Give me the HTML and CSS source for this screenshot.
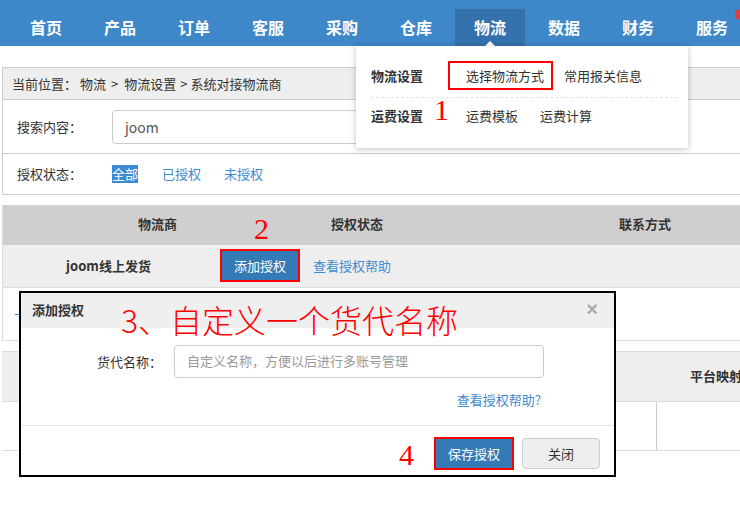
FILE: index.html
```html
<!DOCTYPE html>
<html lang="zh-CN">
<head>
<meta charset="utf-8">
<title>系统对接物流商</title>
<link rel="stylesheet" href="styles.css">
</head>
<body>
<header class="nav">
  <ul class="nav-list">
    <li class="nav-item">首页</li>
    <li class="nav-item">产品</li>
    <li class="nav-item">订单</li>
    <li class="nav-item">客服</li>
    <li class="nav-item">采购</li>
    <li class="nav-item">仓库</li>
    <li class="nav-item active">物流<span class="caret"></span></li>
    <li class="nav-item">数据</li>
    <li class="nav-item">财务</li>
    <li class="nav-item">服务</li>
  </ul>
  <span class="nav-dot"></span>
</header>

<main class="page">
  <div class="crumb">
    <span class="c-lead">当前位置：</span>
    <span class="c-a">物流</span>
    <span class="c-sep1">&gt;</span>
    <span class="c-b">物流设置</span>
    <span class="c-sep2">&gt;</span>
    <span class="c-c">系统对接物流商</span>
  </div>

  <section class="search">
    <div class="search-row">
      <span class="field-label">搜索内容：</span>
      <div class="search-input">joom</div>
    </div>
    <div class="status-row">
      <span class="field-label">授权状态：</span>
      <span class="sel">全部</span>
      <a class="link">已授权</a>
      <a class="link">未授权</a>
    </div>
  </section>

  <section class="table1">
    <div class="thead">
      <span>物流商</span>
      <span>授权状态</span>
      <span></span>
      <span>联系方式</span>
    </div>
    <div class="trow">
      <span class="carrier">joom线上发货</span>
      <button class="btn btn-primary btn-marked">添加授权</button>
      <a class="link">查看授权帮助</a>
    </div>
    <div class="trow2"><span class="dash"></span></div>
  </section>

  <section class="table2">
    <div class="thead2"><span class="col-spacer"></span><span class="th2">平台映射</span></div>
    <div class="trow3"><span class="cell"></span><span class="cell cell-last"></span></div>
  </section>
</main>

<div class="dropdown">
  <div class="dd-row">
    <span class="dd-title">物流设置</span>
    <div class="dd-links"><a>选择物流方式</a><a>常用报关信息</a></div>
  </div>
  <div class="dd-row dd-row2">
    <span class="dd-title">运费设置</span>
    <div class="dd-links"><a>运费模板</a><a>运费计算</a></div>
  </div>
  <span class="dd-mark"></span>
</div>

<div class="modal">
  <div class="modal-head">
    <span class="modal-title">添加授权</span>
    <span class="modal-close">×</span>
  </div>
  <div class="modal-body">
    <div class="form-row">
      <span class="form-label">货代名称：</span>
      <div class="form-input">自定义名称，方便以后进行多账号管理</div>
    </div>
    <div class="help-row"><a class="link">查看授权帮助?</a></div>
  </div>
  <div class="modal-foot">
    <button class="btn btn-primary btn-marked">保存授权</button>
    <button class="btn btn-default">关闭</button>
  </div>
</div>

<span class="anno anno-1">1</span>
<span class="anno anno-2">2</span>
<span class="anno anno-3">3、自定义一个货代名称</span>
<span class="anno anno-4">4</span>
</body>
</html>
```

FILE: styles.css
```css
html, body {
  margin: 0;
  padding: 0;
}
body {
  width: 740px;
  height: 506px;
  overflow: hidden;
  position: relative;
  background: #fff;
  font-family: "Noto Sans CJK SC", "Microsoft YaHei", sans-serif;
  font-size: 13px;
  color: #333;
}
a { cursor: pointer; }

/* nav */
.nav {
  height: 46px;
  background: #3e87c8;
  position: relative;
}
.nav-list {
  list-style: none;
  margin: 0;
  padding: 9px 0 0 11px;
  display: flex;
  gap: 4px;
}
.nav-item {
  width: 70px;
  height: 37px;
  line-height: 36px;
  text-align: center;
  color: #fff;
  font-size: 16px;
  font-weight: bold;
  position: relative;
  flex: none;
}
.nav-item.active {
  background: #3571ad;
}
.caret {
  position: absolute;
  left: 30px;
  bottom: 0;
  width: 0;
  height: 0;
  border-left: 5px solid transparent;
  border-right: 5px solid transparent;
  border-bottom: 5px solid #fff;
}
.nav-dot {
  position: absolute;
  left: 735px;
  top: 9px;
  width: 11px;
  height: 11px;
  border-radius: 50%;
  background: #e83a3a;
}

/* page */
.page {
  width: 760px;
  margin: 21px 0 0 2px;
}
.crumb {
  height: 31px;
  border: 1px solid #ccc;
  background: #eee;
  padding-left: 9px;
  color: #333;
  display: flex;
  align-items: center;
  white-space: nowrap;
}
.c-lead { margin-right: 3px; }
.c-sep1 { margin: 0 6px 0 5px; }
.c-sep2 { margin: 0 3px 0 4px; }
.search {
  border: 1px solid #ccc;
  border-top: none;
}
.search-row {
  height: 53px;
  display: flex;
  align-items: center;
  padding-left: 14px;
  border-bottom: 1px solid #ccc;
}
.field-label {
  width: 95px;
  flex: none;
  color: #333;
}
.search-input {
  width: 400px;
  height: 32px;
  line-height: 32px;
  border: 1px solid #ccc;
  border-radius: 4px;
  padding-left: 12px;
  color: #555;
  font-size: 14px;
}
.status-row {
  height: 40px;
  display: flex;
  align-items: center;
  padding-left: 14px;
  padding-bottom: 1px;
  box-sizing: border-box;
}
.sel {
  background: #3b8bd6;
  color: #fff;
  line-height: 18px;
  margin-right: 24px;
}
.link {
  color: #3d8bd1;
  margin-right: 23px;
}

/* table 1 */
.table1 {
  margin-top: 10px;
  border-left: 1px solid #ddd;
  border-bottom: 1px solid #ddd;
}
.thead {
  height: 40px;
  padding-bottom: 3px;
  box-sizing: border-box;
  background: #cfcfcf;
  display: grid;
  grid-template-columns: 309px 90px 148px 190px;
  align-items: center;
  font-weight: bold;
  text-align: center;
}
.trow {
  height: 43px;
  padding-bottom: 2px;
  box-sizing: border-box;
  background: #eee;
  border-bottom: 1px solid #ddd;
  display: flex;
  align-items: center;
}
.carrier {
  width: 211px;
  text-align: center;
  font-weight: bold;
  flex: none;
}
.trow .btn {
  margin-left: 6px;
  margin-right: 13px;
}
.trow2 {
  height: 52px;
  position: relative;
}
.dash {
  position: absolute;
  left: 12px;
  top: 26px;
  width: 4px;
  height: 1px;
  background: #3d8bd1;
}

/* buttons */
.btn {
  width: 80px;
  height: 33px;
  font-family: inherit;
  font-size: 13px;
  border-radius: 3px;
  padding: 0;
  flex: none;
}
.btn-primary {
  background: #337ab7;
  color: #fff;
  border: 1px solid #2e6da4;
}
.btn-marked {
  border: 2px solid #f00;
  border-radius: 0;
}
.btn-default {
  background: #eee;
  color: #333;
  border: 1px solid #ccc;
  width: 78px;
  height: 31px;
  margin-top: 1px;
  border-radius: 4px;
}

/* table 2 */
.table2 {
  margin-top: 10px;
  border-top: 1px solid #ddd;
  border-bottom: 1px solid #ddd;
}
.thead2 {
  height: 50px;
  padding-bottom: 3px;
  box-sizing: border-box;
  background: #eee;
  display: flex;
  align-items: center;
  border-bottom: 1px solid #ddd;
}
.col-spacer {
  width: 688px;
  flex: none;
}
.th2 {
  font-weight: bold;
  white-space: nowrap;
}
.trow3 {
  height: 48px;
  display: flex;
}
.cell {
  width: 654px;
  border-right: 1px solid #ccc;
  flex: none;
}
.cell-last {
  border-right: none;
  flex: 1;
}

/* dropdown */
.dropdown {
  position: absolute;
  left: 356px;
  top: 46px;
  width: 332px;
  height: 102px;
  background: #fff;
  box-shadow: 0 1px 6px rgba(0, 0, 0, 0.25);
  padding: 0 10px 0 15px;
  box-sizing: border-box;
}
.dd-row {
  height: 44px;
  display: flex;
  align-items: center;
  border-bottom: 1px dashed #e2e2e2;
  padding-top: 7px;
}
.dd-row2 {
  height: 34px;
  padding-top: 0;
  border-bottom: none;
}
.dd-title {
  width: 95px;
  font-weight: bold;
  flex: none;
}
.dd-links {
  display: flex;
  gap: 20px;
}
.dd-row2 .dd-links { gap: 22px; }
.dd-mark {
  position: absolute;
  left: 92px;
  top: 15px;
  width: 101px;
  height: 25px;
  border: 2px solid #f00;
}

/* modal */
.modal {
  position: absolute;
  left: 19px;
  top: 291px;
  width: 597px;
  height: 186px;
  box-sizing: border-box;
  border: 2px solid #000;
  background: #fff;
  display: flex;
  flex-direction: column;
}
.modal-head {
  height: 35px;
  padding: 0 16px 3px 11px;
  box-sizing: border-box;
  background: #efefef;
  display: flex;
  align-items: center;
  justify-content: space-between;
  flex: none;
}
.modal-title {
  font-weight: bold;
}
.modal-close {
  color: #aaa;
  font-size: 20px;
  font-weight: bold;
  font-family: "Liberation Sans", sans-serif;
}
.modal-body {
  height: 98px;
  padding-top: 17px;
  box-sizing: border-box;
  border-bottom: 1px solid #e5e5e5;
  flex: none;
}
.form-row {
  display: flex;
  align-items: center;
}
.form-label {
  width: 141px;
  text-align: right;
  margin-right: 12px;
  flex: none;
}
.form-input {
  width: 356px;
  height: 31px;
  line-height: 30px;
  border: 1px solid #ccc;
  border-radius: 4px;
  padding-left: 12px;
  color: #999;
}
.help-row {
  width: 520px;
  text-align: right;
  margin-top: 12px;
}
.help-row .link {
  margin-right: 0;
}
.modal-foot {
  flex: 1;
  display: flex;
  justify-content: flex-end;
  align-items: flex-start;
  gap: 8px;
  padding: 11px 14px 0 0;
}

/* annotations */
.anno {
  position: absolute;
  color: #f00;
  font-family: "Liberation Serif", serif;
  font-size: 30px;
  line-height: 1;
}
.anno-1 { left: 434px; top: 95px; }
.anno-2 { left: 254px; top: 214px; }
.anno-3 {
  left: 121px;
  top: 303px;
  font-family: "Noto Sans CJK SC", sans-serif;
  font-weight: 300;
  font-size: 32px;
}
.anno-4 { left: 399px; top: 440px; }
```
